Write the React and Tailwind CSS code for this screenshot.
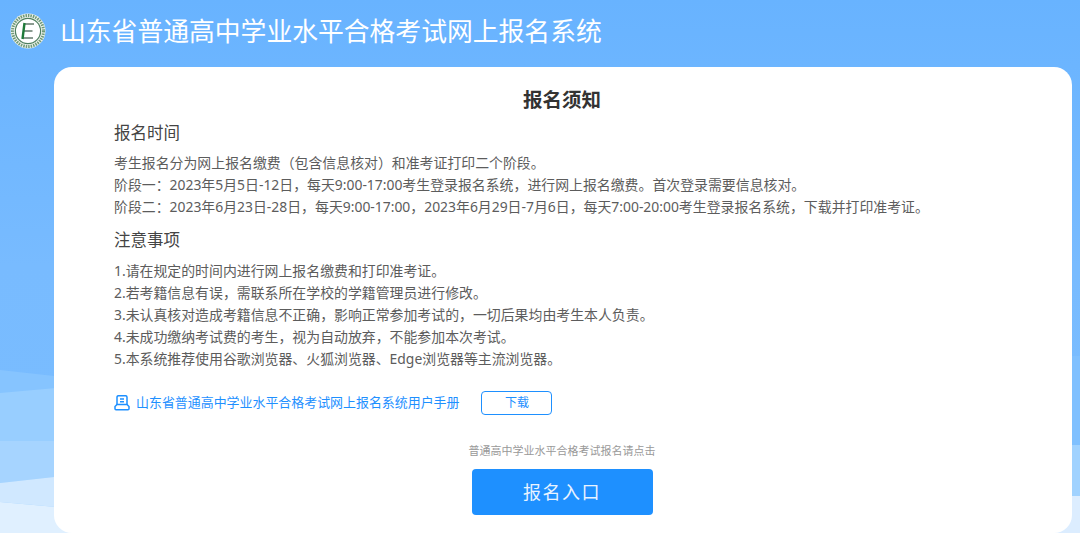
import React from 'react';

const CJK = 'font-["Noto_Sans","Noto_Sans_CJK_SC",sans-serif]';

const TIME_LINES = [
  '考生报名分为网上报名缴费（包含信息核对）和准考证打印二个阶段。',
  '阶段一：2023年5月5日-12日，每天9:00-17:00考生登录报名系统，进行网上报名缴费。首次登录需要信息核对。',
  '阶段二：2023年6月23日-28日，每天9:00-17:00，2023年6月29日-7月6日，每天7:00-20:00考生登录报名系统，下载并打印准考证。',
];

const NOTICE_LINES = [
  '1.请在规定的时间内进行网上报名缴费和打印准考证。',
  '2.若考籍信息有误，需联系所在学校的学籍管理员进行修改。',
  '3.未认真核对造成考籍信息不正确，影响正常参加考试的，一切后果均由考生本人负责。',
  '4.未成功缴纳考试费的考生，视为自动放弃，不能参加本次考试。',
  '5.本系统推荐使用谷歌浏览器、火狐浏览器、Edge浏览器等主流浏览器。',
];

function Logo() {
  return (
    <svg width="36" height="36" viewBox="0 0 36 36" className="shrink-0">
      <circle cx="18" cy="18" r="17.5" fill="#eef2ec" />
      <circle cx="18" cy="18" r="15.5" fill="none" stroke="#6f9a78" strokeWidth="3" strokeDasharray="1.5 1" />
      <circle cx="18" cy="18" r="12.6" fill="#fff" stroke="#4f8060" strokeWidth="1.2" />
      <path d="M14 11h10M13.500 18h9M12.500 25h10.500" stroke="#8a9a90" strokeWidth="1.800" fill="none" />
      <path d="M14.500 10l-1 8M13.500 18l-1 8" stroke="#1f7a3a" strokeWidth="2.400" fill="none" />
    </svg>
  );
}

function ManualIcon() {
  return (
    <svg width="16" height="16" viewBox="0 0 16 16" fill="none" stroke="#1e90ff" strokeWidth="1.500" className="shrink-0">
      <path d="M3 10V2.200a1.500 1.500 0 0 1 1.500-1.500h7A1.500 1.500 0 0 1 13 2.200V10" />
      <path d="M6 4h4M6 6.800h4" />
      <path d="M3 9.500h10l2 2v2.300a1 1 0 0 1-1 1H2a1 1 0 0 1-1-1v-2.300z" />
    </svg>
  );
}

// background bands down both edges of the page
function Waves() {
  return (
    <svg className="absolute inset-0 w-full h-full" viewBox="0 0 1080 533" preserveAspectRatio="none">
      <path d="M0 370L90 380V533H0Z" fill="#86c4ff" />
      <path d="M0 393L90 385V533H0Z" fill="#98ceff" />
      <path d="M0 441H90V473L0 483Z" fill="#a6d4ff" />
      <path d="M0 483L90 473V510L0 502Z" fill="#d0e8ff" />
      <path d="M0 502L90 510V533H0Z" fill="#e0f0ff" />
      <path d="M1040 356H1080V533H1040Z" fill="#7fc0ff" />
      <path d="M1040 445H1080V533H1040Z" fill="#a0d2ff" />
      <path d="M1040 496H1080V533H1040Z" fill="#dcedff" />
    </svg>
  );
}

export default function App() {
  return (
    <div className={`relative h-[533px] w-[1080px] overflow-hidden bg-gradient-to-b from-[#68b3ff] via-[#78bbff] to-[#7abdff] ${CJK}`}>
      <Waves />

      <div className="relative h-[67px]">
        <div className="flex items-center gap-[14px] pl-[10px] pt-[13px]">
          <Logo />
          <h1 className="text-[25.800px] leading-9 font-normal text-white">山东省普通高中学业水平合格考试网上报名系统</h1>
        </div>
      </div>

      <main className="relative ml-[54px] h-[466px] w-[1018px] rounded-[18px] bg-white text-[#5c5c5c]">
        <h2 className="pt-[19px] pr-[2px] text-center text-[19.500px] leading-7 font-bold text-[#333]">报名须知</h2>

        <div className="pl-[60px]">
          <h3 className="mt-[7px] text-[16.500px] leading-6 font-normal text-[#444]">报名时间</h3>
          <div className="mt-[7px] text-[13.900px] leading-[22px]">
            {TIME_LINES.map((line) => (
              <p key={line}>{line}</p>
            ))}
          </div>

          <h3 className="mt-[10px] text-[16.500px] leading-6 font-normal text-[#444]">注意事项</h3>
          <div className="mt-[8px] text-[13.900px] leading-[22px]">
            {NOTICE_LINES.map((line) => (
              <p key={line}>{line}</p>
            ))}
          </div>

          <div className="mt-[21px] flex items-center">
            <ManualIcon />
            <a className="ml-[6px] text-[12.950px] text-[#1e90ff]">山东省普通高中学业水平合格考试网上报名系统用户手册</a>
            <button className="ml-[22px] h-6 w-[71px] rounded border border-[#1e90ff] bg-white text-xs text-[#1e90ff]">下载</button>
          </div>
        </div>

        <div className="mt-[28px] flex flex-col items-center pr-[2px]">
          <p className="text-[11px] leading-4 text-[#999]">普通高中学业水平合格考试报名请点击</p>
          <button className="mt-[10px] h-[46px] w-[181px] rounded bg-[#1e90ff] text-[18px] tracking-[1.500px] text-[#e8f3ff]">报名入口</button>
        </div>
      </main>
    </div>
  );
}
